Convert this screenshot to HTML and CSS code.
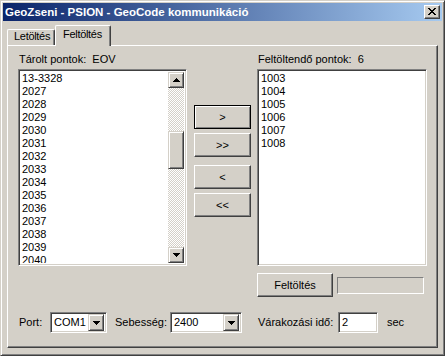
FILE: index.html
```html
<!DOCTYPE html>
<html lang="hu">
<head>
    <meta charset="UTF-8">
    <meta name="viewport" content="width=device-width, initial-scale=1.0">
    <title>GeoZseni - PSION - GeoCode kommunikáció</title>
    <link rel="stylesheet" href="styles.css">
</head>
<body>
    <div class="window">
        <div class="titlebar">
            <span class="title">GeoZseni - PSION - GeoCode kommunikáció</span>
            <div class="close-btn">
                <svg width="8" height="7" viewBox="0 0 8 7" shape-rendering="crispEdges">
                    <path d="M0 0h2v1h1v1h2V1h1V0h2v1H7v1H6v1H5v1h1v1h1v1h1v1H6V6H5V5H3v1H2v1H0V6h1V5h1V4h1V3H2V2H1V1H0z" fill="#000"/>
                </svg>
            </div>
        </div>
        <div class="dialog">
            <div class="tabs">
                <div class="tab">Letöltés</div>
                <div class="tab active">Feltöltés</div>
            </div>
            <div class="panel">
                <div class="layout">
                    <div class="label label-left">Tárolt pontok:&nbsp; EOV</div>
                    <div class="label label-right">Feltöltendő pontok:&nbsp; 6</div>

                    <div class="listbox list-left">
                        <div class="items">
                            <div>13-3328</div>
                            <div>2027</div>
                            <div>2028</div>
                            <div>2029</div>
                            <div>2030</div>
                            <div>2031</div>
                            <div>2032</div>
                            <div>2033</div>
                            <div>2034</div>
                            <div>2035</div>
                            <div>2036</div>
                            <div>2037</div>
                            <div>2038</div>
                            <div>2039</div>
                            <div>2040</div>
                        </div>
                        <div class="scrollbar">
                            <div class="raised sb-btn">
                                <svg width="7" height="4" viewBox="0 0 7 4" shape-rendering="crispEdges"><path d="M3 0h1v1h1v1h1v1h1v1H0V3h1V2h1V1h1z" fill="#000"/></svg>
                            </div>
                            <div class="sb-track">
                                <div class="raised sb-thumb"></div>
                            </div>
                            <div class="raised sb-btn">
                                <svg width="7" height="4" viewBox="0 0 7 4" shape-rendering="crispEdges"><path d="M0 0h7v1H6v1H5v1H4v1H3V3H2V2H1V1H0z" fill="#000"/></svg>
                            </div>
                        </div>
                    </div>

                    <div class="move-buttons">
                        <div class="button default">&gt;</div>
                        <div class="button">&gt;&gt;</div>
                        <div class="button spaced">&lt;</div>
                        <div class="button">&lt;&lt;</div>
                    </div>

                    <div class="listbox list-right">
                        <div class="items">
                            <div>1003</div>
                            <div>1004</div>
                            <div>1005</div>
                            <div>1006</div>
                            <div>1007</div>
                            <div>1008</div>
                        </div>
                    </div>

                    <div class="upload-row">
                        <div class="button upload-btn">Feltöltés</div>
                        <div class="status-box"></div>
                    </div>

                    <div class="port-row">
                        <span class="field-label port-label">Port:</span>
                        <div class="combo combo-port">
                            <span class="combo-text">COM1</span>
                            <div class="raised combo-btn">
                                <svg width="7" height="4" viewBox="0 0 7 4" shape-rendering="crispEdges"><path d="M0 0h7v1H6v1H5v1H4v1H3V3H2V2H1V1H0z" fill="#000"/></svg>
                            </div>
                        </div>
                        <span class="field-label speed-label">Sebesség:</span>
                        <div class="combo combo-speed">
                            <span class="combo-text">2400</span>
                            <div class="raised combo-btn">
                                <svg width="7" height="4" viewBox="0 0 7 4" shape-rendering="crispEdges"><path d="M0 0h7v1H6v1H5v1H4v1H3V3H2V2H1V1H0z" fill="#000"/></svg>
                            </div>
                        </div>
                    </div>

                    <div class="wait-row">
                        <span class="field-label wait-label">Várakozási idő:</span>
                        <div class="edit">2</div>
                        <span class="sec">sec</span>
                    </div>
                </div>
            </div>
        </div>
    </div>
</body>
</html>
```

FILE: styles.css
```css
* {
    box-sizing: border-box;
}
body {
    margin: 0;
    background-color: #d4d0c8;
    font-family: "Liberation Sans", Arial, sans-serif;
    font-size: 11px;
    line-height: 13px;
    color: #000;
}
.window {
    width: 445px;
    height: 356px;
    background-color: #d4d0c8;
    border: 1px solid;
    border-color: #d4d0c8 #404040 #404040 #d4d0c8;
    box-shadow: inset 1px 1px #fff, inset -1px -1px #808080;
    padding: 2px;
    display: flex;
    flex-direction: column;
}
.titlebar {
    height: 18px;
    background: linear-gradient(to right, #0a246a, #a6caf0);
    display: flex;
    align-items: center;
    padding: 0 2px 0 2px;
}
.title {
    color: #fff;
    font-weight: bold;
    font-size: 11.5px;
}
.close-btn {
    margin-left: auto;
    width: 16px;
    height: 14px;
    background-color: #d4d0c8;
    border: 1px solid;
    border-color: #fff #404040 #404040 #fff;
    box-shadow: inset -1px -1px #808080;
    display: flex;
    align-items: center;
    justify-content: center;
    padding: 0 1px 1px 0;
}
.dialog {
    padding: 4px 4px 0 4px;
}
.tabs {
    display: flex;
    align-items: flex-end;
    height: 20px;
}
.tab {
    width: 48px;
    height: 16px;
    padding-left: 6px;
    letter-spacing: -0.3px;
    white-space: nowrap;
    border-top: 1px solid #fff;
    border-left: 1px solid #fff;
    border-right: 1px solid #404040;
    box-shadow: inset -1px 0 #808080;
    border-radius: 2px 2px 0 0;
}
.tab.active {
    width: 56px;
    height: 21px;
    padding-left: 7px;
    padding-top: 2px;
    margin-bottom: -1px;
    background-color: #d4d0c8;
    position: relative;
    z-index: 1;
}
.panel {
    width: 431px;
    height: 303px;
    border: 1px solid;
    border-color: #fff #404040 #404040 #fff;
    box-shadow: inset -1px -1px #808080;
    padding: 7px 0 0 10px;
}
.layout {
    display: grid;
    grid-template-columns: 169px 70px 170px;
    grid-template-rows: 16px 197px 31px 36px;
    grid-template-areas:
        "lbl1 . lbl2"
        "list1 moves list2"
        ". . upload"
        "ports ports wait";
}
.label {
    padding-left: 1px;
    white-space: nowrap;
}
.label-left { grid-area: lbl1; }
.label-right { grid-area: lbl2; }

/* sunken list boxes */
.listbox {
    display: flex;
    background-color: #fff;
    border: 1px solid;
    border-color: #808080 #fff #fff #808080;
    box-shadow: inset 1px 1px #404040, inset -1px -1px #d4d0c8;
    padding: 2px;
    overflow: hidden;
}
.list-left { grid-area: list1; }
.list-right { grid-area: list2; }
.items {
    flex: 1;
    padding-left: 1px;
    overflow: hidden;
}
.scrollbar {
    width: 16px;
    display: flex;
    flex-direction: column;
}
.raised {
    background-color: #d4d0c8;
    border: 1px solid;
    border-color: #d4d0c8 #404040 #404040 #d4d0c8;
    box-shadow: inset 1px 1px #fff, inset -1px -1px #808080;
}
.sb-btn {
    height: 16px;
    display: flex;
    align-items: center;
    justify-content: center;
}
.sb-track {
    flex: 1;
    background-color: #fff;
    background-image: conic-gradient(#d4d0c8 25%, #fff 0 50%, #d4d0c8 0 75%, #fff 0);
    background-size: 2px 2px;
}
.sb-thumb {
    margin-top: 43px;
    height: 38px;
}

/* push buttons */
.move-buttons {
    grid-area: moves;
    padding: 36px 6px 0 7px;
    display: flex;
    flex-direction: column;
    gap: 4px;
}
.button {
    height: 24px;
    display: flex;
    align-items: center;
    justify-content: center;
    background-color: #d4d0c8;
    border: 1px solid;
    border-color: #fff #404040 #404040 #fff;
    box-shadow: inset -1px -1px #808080;
}
.button.default {
    border-color: #000;
    box-shadow: inset 1px 1px #fff, inset -1px -1px #808080;
}
.button.spaced {
    margin-top: 4px;
}
.upload-row {
    grid-area: upload;
    display: flex;
    align-items: flex-end;
    gap: 4px;
}
.upload-btn {
    width: 76px;
    height: 24px;
}
.status-box {
    width: 87px;
    height: 17px;
    margin-bottom: 3px;
    border: 1px solid;
    border-color: #808080 #fff #fff #808080;
}

/* bottom row */
.port-row, .wait-row {
    display: flex;
    align-items: flex-end;
}
.port-row { grid-area: ports; }
.wait-row { grid-area: wait; }
.field-label {
    height: 21px;
    display: flex;
    align-items: center;
    white-space: nowrap;
}
.port-label {
    width: 32px;
    padding-left: 1px;
}
.speed-label {
    width: 63px;
    padding-left: 8px;
}
.wait-label {
    width: 81px;
    padding-left: 1px;
}
.combo, .edit {
    height: 21px;
    background-color: #fff;
    border: 1px solid;
    border-color: #808080 #fff #fff #808080;
    box-shadow: inset 1px 1px #404040, inset -1px -1px #d4d0c8;
    padding: 2px;
    display: flex;
    align-items: center;
}
.combo-port { width: 57px; }
.combo-speed { width: 72px; }
.combo-text {
    flex: 1;
    padding-left: 1px;
}
.combo-btn {
    width: 16px;
    height: 17px;
    display: flex;
    align-items: center;
    justify-content: center;
}
.edit {
    width: 40px;
    padding-left: 3px;
}
.sec {
    height: 21px;
    display: flex;
    align-items: center;
    margin-left: 9px;
}
```
